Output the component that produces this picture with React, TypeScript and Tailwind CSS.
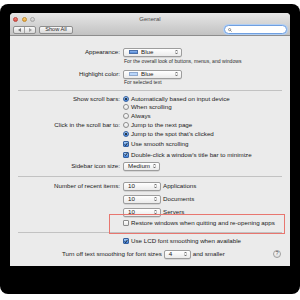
import React from "react";

function Arrows() {
  return (
    <svg width="3" height="6" viewBox="0 0 3 6" className="shrink-0">
      <path d="M0.4 2.4 L1.5 1 L2.6 2.4" fill="none" stroke="#333" strokeWidth="0.7" />
      <path d="M0.4 3.6 L1.5 5 L2.6 3.6" fill="none" stroke="#333" strokeWidth="0.7" />
    </svg>
  );
}

function Popup({ className, children }: { className: string; children: React.ReactNode }) {
  return (
    <div
      className={`h-[9px] flex items-center rounded-[2px] border border-[#9d9d9d] bg-gradient-to-b from-white to-[#ebebeb] shadow-[0_0.5px_0.5px_rgba(0,0,0,0.18)] pl-[3px] pr-[3px] shrink-0 ${className}`}
    >
      <div className="flex-1 flex items-center gap-[2px]">{children}</div>
      <Arrows />
    </div>
  );
}

function Radio({ on }: { on?: boolean }) {
  if (on)
    return (
      <span className="w-[6px] h-[6px] rounded-full border border-[#35609f] bg-gradient-to-b from-[#a6ccf5] to-[#3d7dd6] flex items-center justify-center shrink-0">
        <span className="w-[2px] h-[2px] rounded-full bg-[#111]" />
      </span>
    );
  return <span className="w-[6px] h-[6px] rounded-full border border-[#8c8c8c] bg-gradient-to-b from-white to-[#e4e4e4] shrink-0" />;
}

function Check({ on }: { on?: boolean }) {
  if (on)
    return (
      <span className="w-[6px] h-[6px] rounded-[1px] border border-[#35609f] bg-gradient-to-b from-[#a6ccf5] to-[#3d7dd6] flex items-center justify-center shrink-0">
        <svg width="5" height="5" viewBox="0 0 5 5">
          <path d="M0.8 2.4 L2 3.8 L4.4 0.4" fill="none" stroke="#111" strokeWidth="1" />
        </svg>
      </span>
    );
  return <span className="w-[6px] h-[6px] rounded-[1px] border border-[#8c8c8c] bg-gradient-to-b from-white to-[#e8e8e8] shrink-0" />;
}

function Row({ className, label, children }: { className: string; label?: string; children: React.ReactNode }) {
  return (
    <div className={`flex items-center shrink-0 ${className}`}>
      <div className="w-[110px] text-right shrink-0 whitespace-nowrap">{label}</div>
      <div className="ml-[3px] flex items-center gap-[2px] whitespace-nowrap">{children}</div>
    </div>
  );
}

function Sep({ className }: { className: string }) {
  return (
    <div className={`shrink-0 px-[8px] ${className}`}>
      <div className="h-[1px] bg-[#c2c2c2]" />
    </div>
  );
}

export default function App() {
  return (
    <div className="w-[300px] h-[300px] bg-white pt-[4px] font-['Liberation_Sans',Arial,sans-serif] text-[6.2px] leading-none text-[#1a1a1a]">
      <div className="h-[290px] w-[300px] bg-black rounded-[8px] pt-[9px] pl-[10px]">
        <div className="relative w-[280px] h-[253px] rounded-t-[4px] overflow-hidden bg-[#ebebeb] flex flex-col">
          {/* title bar + toolbar */}
          <div className="h-[23px] shrink-0 bg-gradient-to-b from-[#e6e6e6] to-[#c2c2c2] border-b border-[#8d8d8d] flex flex-col">
            <div className="h-[11px] pt-[1px] grid grid-cols-[1fr_auto_1fr] items-center">
              <div className="flex items-center gap-[3.5px] pl-[3px]">
                <span className="w-[5px] h-[5px] rounded-full bg-gradient-to-b from-[#f7877f] to-[#de4b41] border-[0.5px] border-[#b8433b]" />
                <span className="w-[5px] h-[5px] rounded-full bg-gradient-to-b from-[#fbd27a] to-[#eaa532] border-[0.5px] border-[#c08a2e]" />
                <span className="w-[5px] h-[5px] rounded-full bg-gradient-to-b from-[#e2e2e2] to-[#c4c4c4] border-[0.5px] border-[#a4a4a4]" />
              </div>
              <div className="text-[6px] text-[#4a4a4a]">General</div>
              <div />
            </div>
            <div className="h-[11px] flex items-center pl-[3px] pr-[3px]">
              <div className="w-[23px] h-[8px] flex rounded-[2px] border border-[#8e8e8e] bg-gradient-to-b from-[#fafafa] to-[#d9d9d9] overflow-hidden">
                <div className="flex-1 flex items-center justify-center">
                  <svg width="3" height="4" viewBox="0 0 3 4">
                    <path d="M0 2 L3 0 L3 4 Z" fill="#777" />
                  </svg>
                </div>
                <div className="w-[1px] bg-[#a2a2a2]" />
                <div className="flex-1 flex items-center justify-center">
                  <svg width="3" height="4" viewBox="0 0 3 4">
                    <path d="M3 2 L0 0 L0 4 Z" fill="#9a9a9a" />
                  </svg>
                </div>
              </div>
              <div className="ml-[3px] w-[34px] h-[8px] flex items-center justify-center rounded-[2px] border border-[#8e8e8e] bg-gradient-to-b from-[#fafafa] to-[#d9d9d9] text-[5.6px] text-[#2a2a2a]">
                Show All
              </div>
              <div className="flex-1" />
              <div className="w-[63px] h-[9px] rounded-full bg-white border border-[#6f9fe0] shadow-[0_0_0_1px_#b2cff3] flex items-center pl-[3px]">
                <svg width="4" height="4" viewBox="0 0 4 4">
                  <circle cx="1.6" cy="1.6" r="1.1" fill="none" stroke="#555" strokeWidth="0.6" />
                  <path d="M2.4 2.4 L3.6 3.6" stroke="#555" strokeWidth="0.7" />
                </svg>
              </div>
            </div>
          </div>

          {/* content */}
          <div className="flex flex-col flex-1">
            <div className="h-[11px] shrink-0" />
            <Row className="h-[10px]" label="Appearance:">
              <Popup className="w-[59px]">
                <span className="ml-[2px] w-[9px] h-[4px] bg-gradient-to-b from-[#8fb6ec] to-[#4f86d6] border-[0.5px] border-[#4a6fa8]" />
                <span className="ml-[1px]">Blue</span>
              </Popup>
            </Row>
            <div className="h-[9px] shrink-0 flex items-center pl-[114px] text-[5.1px] text-[#2e2e2e] whitespace-nowrap">
              For the overall look of buttons, menus, and windows
            </div>
            <div className="h-[3px] shrink-0" />
            <Row className="h-[10px]" label="Highlight color:">
              <Popup className="w-[59px]">
                <span className="ml-[2px] w-[9px] h-[4px] bg-[#b9d6fb] border-[0.5px] border-[#8fa9cf]" />
                <span className="ml-[1px]">Blue</span>
              </Popup>
            </Row>
            <div className="h-[8px] shrink-0 flex items-center pl-[114px] text-[5.1px] text-[#2e2e2e] whitespace-nowrap">
              For selected text
            </div>
            <Sep className="h-[7.75px] pt-[3px]" />

            <Row className="h-[8.5px]" label="Show scroll bars:">
              <Radio on />
              <span>Automatically based on input device</span>
            </Row>
            <Row className="h-[8.5px]">
              <Radio />
              <span>When scrolling</span>
            </Row>
            <Row className="h-[8.75px]">
              <Radio />
              <span>Always</span>
            </Row>
            <Row className="h-[9px]" label="Click in the scroll bar to:">
              <Radio />
              <span>Jump to the next page</span>
            </Row>
            <Row className="h-[9.5px]">
              <Radio on />
              <span>Jump to the spot that’s clicked</span>
            </Row>
            <Row className="h-[10.5px]">
              <Check on />
              <span>Use smooth scrolling</span>
            </Row>
            <Row className="h-[11px]">
              <Check on />
              <span>Double-click a window’s title bar to minimize</span>
            </Row>
            <Row className="h-[11.5px]" label="Sidebar icon size:">
              <Popup className="w-[37px]">
                <span className="ml-[1px]">Medium</span>
              </Popup>
            </Row>
            <Sep className="h-[7.5px] pt-[4px]" />

            <Row className="h-[13px]" label="Number of recent items:">
              <Popup className="w-[38px]">
                <span className="ml-[1px]">10</span>
              </Popup>
              <span>Applications</span>
            </Row>
            <Row className="h-[13px]">
              <Popup className="w-[38px]">
                <span className="ml-[1px]">10</span>
              </Popup>
              <span>Documents</span>
            </Row>
            <Row className="h-[13px]">
              <Popup className="w-[38px]">
                <span className="ml-[1px]">10</span>
              </Popup>
              <span>Servers</span>
            </Row>
            <Row className="h-[9px]">
              <Check />
              <span>Restore windows when quitting and re-opening apps</span>
            </Row>
            <Sep className="h-[9px] pt-[4.5px]" />
            <Row className="h-[10px]">
              <Check on />
              <span>Use LCD font smoothing when available</span>
            </Row>
            <div className="h-[15px] shrink-0 flex items-center pl-[52px] whitespace-nowrap">
              <span>Turn off text smoothing for font sizes</span>
              <Popup className="ml-[2px] w-[27px]">
                <span className="ml-[1px]">4</span>
              </Popup>
              <span className="ml-[2px]">and smaller</span>
              <div className="flex-1" />
              <div className="mr-[9px] w-[8px] h-[8px] rounded-full border border-[#9f9f9f] bg-gradient-to-b from-white to-[#dedede] flex items-center justify-center text-[5.5px] text-[#444]">
                ?
              </div>
            </div>
          </div>

          {/* red annotation box */}
          <div className="absolute left-[99px] top-[201px] w-[176px] h-[20px] border-[1.5px] border-[#e8766f]" />
        </div>
      </div>
    </div>
  );
}
